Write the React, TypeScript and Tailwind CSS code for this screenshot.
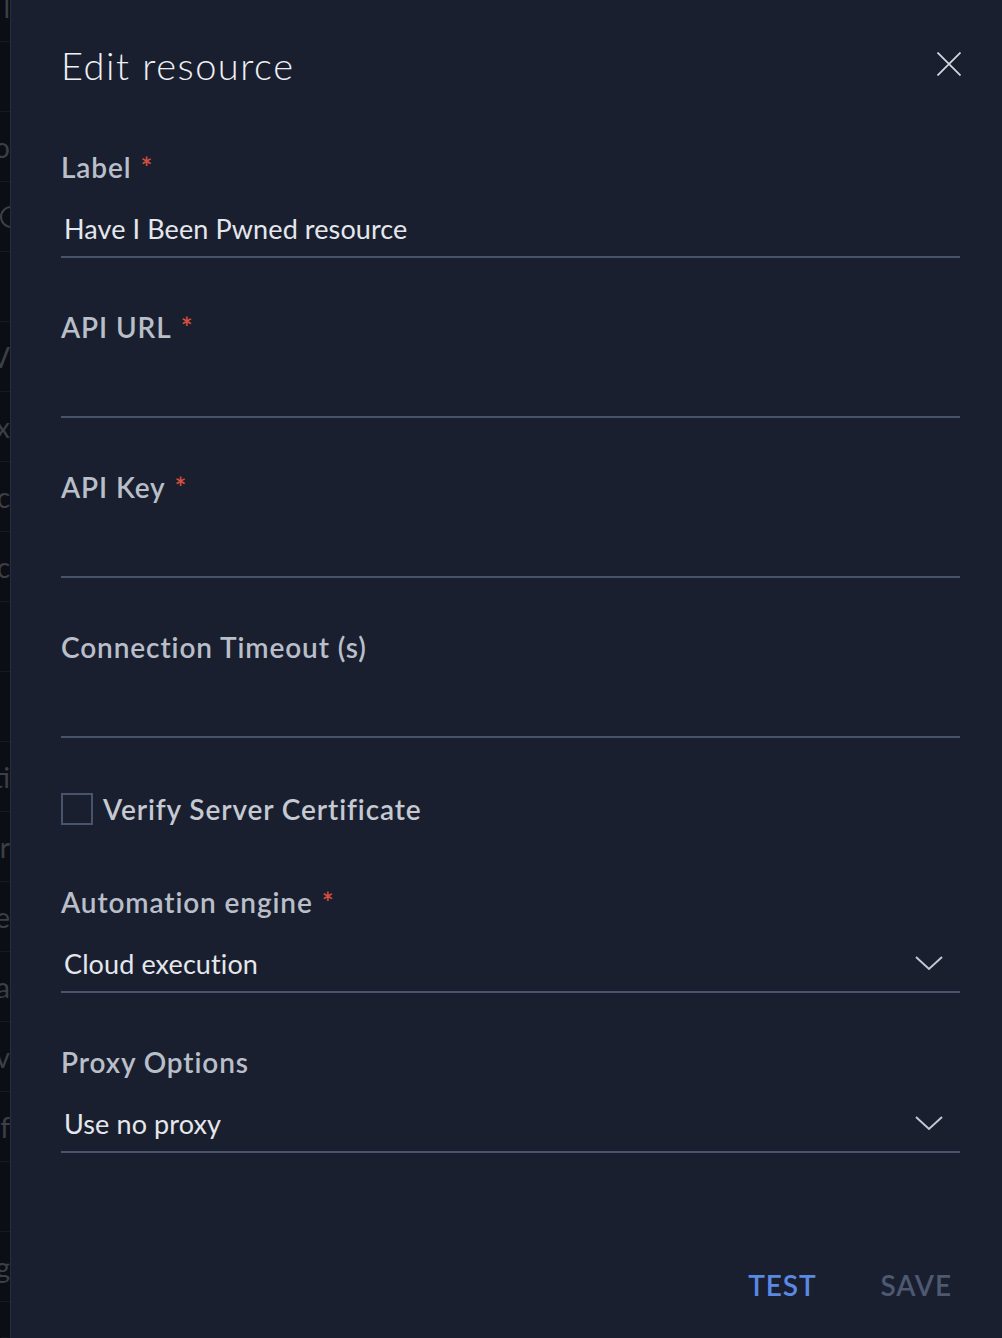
const bgRows: string[] = [
  'l', '', 'o', 'c', '', 'V', 'x', 'c', 'oc', '', '', 'ti', 'r', 'e', 'a', 'iv', 'f', '', 'rg', '-',
]

function Backdrop() {
  return (
    <div className="w-[10px] shrink-0 overflow-hidden bg-[#0c0e15] -mt-[28px]" aria-hidden>
      {bgRows.map((t, i) => (
        <div
          key={i}
          className="h-[70px] flex items-center justify-end border-b border-[#171a22] text-[28px] text-[#3b3f48] whitespace-nowrap"
        >
          {i === 3 ? (
            <span className="block w-[22px] h-[22px] shrink-0 rounded-full border-2 border-[#3b3f48] -mr-[12px]" />
          ) : (
            <span>{t}</span>
          )}
        </div>
      ))}
    </div>
  )
}

function Field({
  label,
  required,
  value,
  select,
  className = '',
}: {
  label: string
  required?: boolean
  value?: string
  select?: boolean
  className?: string
}) {
  return (
    <div className={className}>
      <div className="h-[34px] leading-[34px] text-[28px] font-semibold text-[#b9bfc9] tracking-[0.9px]">
        {label}
        {required && <span className="ml-[9px] text-[#d9503c]">*</span>}
      </div>
      <div className="h-[74px] flex items-end justify-between pb-[10px] pl-[3px] border-b-2 border-[#48536c]">
        <span className="leading-[34px] text-[27px] text-[#e4e7ec] tracking-[0.1px]">{value}</span>
        {select && (
          <svg width="28" height="16" viewBox="0 0 28 16" className="mr-[17px] mb-[10px]">
            <path d="M1 2 L14 14 L27 2" fill="none" stroke="#c3c8d0" strokeWidth="2" />
          </svg>
        )}
      </div>
    </div>
  )
}

export default function App() {
  return (
    <div
      className="flex w-[1002px] h-[1338px] overflow-hidden bg-[#1a1f2f]"
      style={{ fontFamily: 'Lato, "Open Sans", sans-serif' }}
    >
      <Backdrop />
      <div className="flex-1 flex flex-col border-l border-[#252d43] bg-[#1a1f2f] pl-[50px] pr-[42px] pt-[42px]">
        <div className="flex items-start justify-between">
          <h1 className="h-[46px] leading-[46px] text-[38px] font-light text-[#eef0f4] tracking-[1.5px]">
            Edit resource
          </h1>
          <button className="mt-[10px] -mr-[1px] text-[#d5d9df]">
            <svg width="24" height="24" viewBox="0 0 24 24">
              <path d="M0.5 0.5 L23.5 23.5 M23.5 0.5 L0.5 23.5" stroke="currentColor" strokeWidth="1.7" fill="none" />
            </svg>
          </button>
        </div>

        <Field className="mt-[62px]" label="Label" required value="Have I Been Pwned resource" />
        <Field className="mt-[52px]" label="API URL" required />
        <Field className="mt-[52px]" label="API Key" required />
        <Field className="mt-[52px]" label="Connection Timeout (s)" />

        <label className="mt-[55px] h-[32px] flex items-center gap-[10px]">
          <span className="w-[32px] h-[32px] border-2 border-[#48536c]" />
          <span className="text-[28px] font-semibold text-[#c4c9d2] tracking-[0.9px]">Verify Server Certificate</span>
        </label>

        <Field className="mt-[60px]" label="Automation engine" required value="Cloud execution" select />
        <Field className="mt-[52px]" label="Proxy Options" value="Use no proxy" select />

        <div className="mt-[111px] flex justify-end gap-[64px] pr-[8px]">
          <button className="text-[28px] font-semibold text-[#5a89e4] tracking-[0.9px]">TEST</button>
          <button className="text-[28px] font-semibold text-[#4d5971] tracking-[0.9px]">SAVE</button>
        </div>
      </div>
    </div>
  )
}
